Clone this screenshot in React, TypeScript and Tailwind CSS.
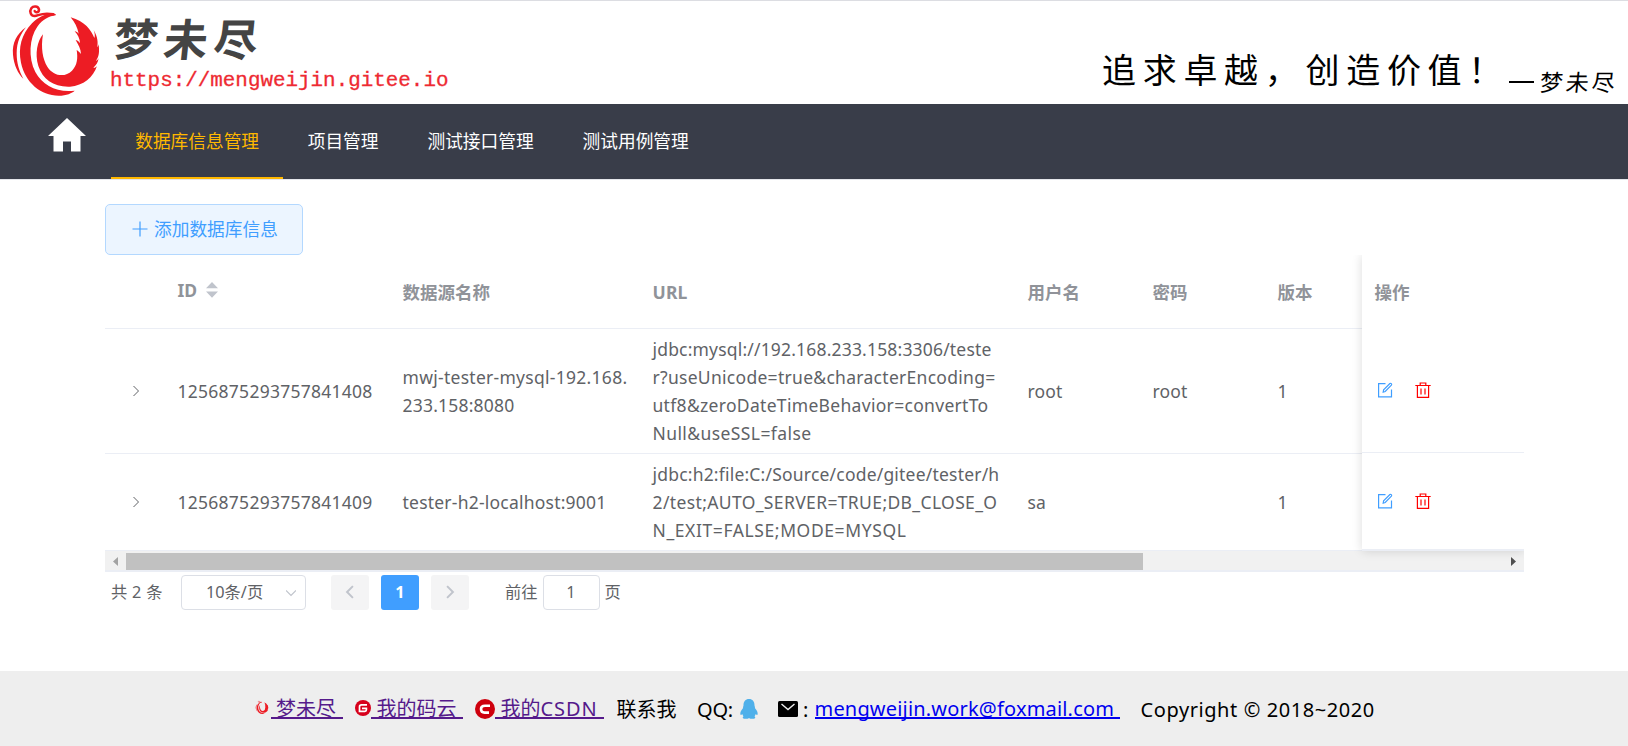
import React from "react";

const ui = "font-['Noto_Sans','Noto_Sans_CJK_SC',sans-serif]";

function PhoenixMark({ className }: { className: string }) {
  return (
    <svg viewBox="0 0 288 294" className={className} fill="#ed1c24">
      <path d="M80 27C84 34 94 30 93 22C90 12 76 11 70 19C63 29 69 42 80 42C92 41 102 30 136 37" fill="none" stroke="#ed1c24" strokeWidth="7.500" strokeLinecap="round" />
      <path d="M143 36C124 30 96 40 72 64C40 98 30 136 39 182C52 242 98 280 152 281C176 281 192 273 200 266C148 273 104 250 82 210C60 166 64 108 88 74C104 52 124 42 143 40Z" />
      <path d="M54 76C26 96 12 122 15 158C18 190 30 214 46 230C34 208 26 184 26 154C26 120 38 96 54 76Z" />
      <path d="M188 46C230 58 250 84 259 108C262 102 260 92 257 84C270 106 270 122 268 136C271 132 272 128 271 124C276 150 272 166 264 176C268 176 270 172 272 168C270 182 264 190 256 197C260 198 264 196 267 192C256 226 226 251 186 254C138 256 104 232 91 192C80 154 88 118 105 97C98 138 104 172 118 194C136 222 170 228 192 206C208 190 210 168 206 144C212 148 216 152 219 156C218 140 212 130 203 114C210 116 213 120 216 123C215 108 209 98 200 88C205 89 209 91 212 95C208 76 200 60 188 46Z" />
    </svg>
  );
}

function Home() {
  return (
    <svg viewBox="0 0 38 34" className="h-[34px] w-[38px]" fill="#fff">
      <path d="M19 0L38 18H32.500V33.500H23V23.500H15V33.500H5.500V18H0Z" />
    </svg>
  );
}

function Plus() {
  return (
    <svg viewBox="0 0 16 16" className="size-4" stroke="#409eff" strokeWidth="1.200">
      <path d="M8 .5v15M.5 8h15" />
    </svg>
  );
}

function Chevron({ className, dir, width = 1.2 }: { className: string; dir: "left" | "right" | "down"; width?: number }) {
  const d = { left: "M7.500 1L2.500 6L7.500 11", right: "M2.500 1L7.500 6L2.500 11", down: "M0 3.500L5 8.500L10 3.500" }[dir];
  return (
    <svg viewBox="0 0 10 12" className={className} fill="none" stroke="currentColor" strokeWidth={width}>
      <path d={d} />
    </svg>
  );
}

function EditIcon() {
  return (
    <svg viewBox="0 0 16 16" className="size-4" fill="none" stroke="#409eff" strokeWidth="1.200">
      <path d="M8.500 1.600H1.600V14.900H14.500V7.500" />
      <path d="M6.200 10.200L6.600 7.800L12.900 1.500Q13.600 1 14.300 1.700Q15 2.400 14.400 3.100L8.200 9.500Z" />
    </svg>
  );
}

function TrashIcon() {
  return (
    <svg viewBox="0 0 16 16" className="size-4" fill="none" stroke="#f00" strokeWidth="1.200">
      <path d="M.3 3.500H15.700M5.200 3.300V1H10.800V3.300M2.400 3.500V15.400H13.600V3.500M6 6.500V12.500M10 6.500V12.500" />
    </svg>
  );
}

function SortIcon() {
  return (
    <svg viewBox="0 0 12 16" className="h-4 w-3" fill="#c0c4cc">
      <path d="M6 0L12 6.300H0ZM6 15.700L0 9.500H12Z" />
    </svg>
  );
}

const navItems = ["数据库信息管理", "项目管理", "测试接口管理", "测试用例管理"];

const columns = "grid grid-cols-[60px_225px_250px_375px_125px_125px_96.5px]";

const rows = [
  {
    id: "1256875293757841408",
    name: [
      { t: "mwj-tester-mysql-192.168.", c: "tracking-[0.28px]" },
      { t: "233.158:8080", c: "tracking-[0.2px]" },
    ],
    url: [
      { t: "jdbc:mysql://192.168.233.158:3306/teste", c: "tracking-[0.18px]" },
      { t: "r?useUnicode=true&characterEncoding=", c: "tracking-[0.29px]" },
      { t: "utf8&zeroDateTimeBehavior=convertTo", c: "tracking-[0.31px]" },
      { t: "Null&useSSL=false", c: "tracking-[0.41px]" },
    ],
    user: "root",
    password: "root",
    version: "1",
    height: "h-[125px]",
  },
  {
    id: "1256875293757841409",
    name: [{ t: "tester-h2-localhost:9001", c: "tracking-[0.22px]" }],
    url: [
      { t: "jdbc:h2:file:C:/Source/code/gitee/tester/h", c: "tracking-[0.2px]" },
      { t: "2/test;AUTO_SERVER=TRUE;DB_CLOSE_O", c: "tracking-[0.37px]" },
      { t: "N_EXIT=FALSE;MODE=MYSQL", c: "tracking-[0.6px]" },
    ],
    user: "sa",
    password: "",
    version: "1",
    height: "h-[97px]",
  },
];

function Lines({ items }: { items: { t: string; c: string }[] }) {
  return (
    <div className="pl-[12.5px]">
      {items.map((l) => (
        <div key={l.t} className={`whitespace-nowrap ${l.c}`}>
          {l.t}
        </div>
      ))}
    </div>
  );
}

function Header() {
  return (
    <header className="flex h-[104px] justify-between border-t border-[#dcdde2] bg-white">
      <div className="flex pl-2">
        <PhoenixMark className="mt-px h-[98px] w-24" />
        <div className="flex flex-col pl-1.5">
          <div className="mt-[8px] ml-[4px] flex h-[60px] -skew-x-6 items-center gap-[6px] text-[44px] leading-none font-bold text-[#444]">
            <span>梦</span>
            <span>未</span>
            <span>尽</span>
          </div>
          <div className="font-['Liberation_Mono',monospace] text-[20.900px] leading-6 text-[#ee2a32] [-webkit-text-stroke:0.3px_#ee2a32]">https://mengweijin.gitee.io</div>
        </div>
      </div>
      <div className="flex pt-[45px] pr-[13px] text-black">
        <div className="flex h-12 items-center text-[34px] leading-none tracking-[6.700px]">追求卓越，创造价值！</div>
        <div className="mt-[22px] flex h-7 items-center text-[23px] leading-none tracking-[3px]">
          <span className="mr-1.5 h-[2px] w-[25px] bg-black" />
          <span className="-mr-[3px] -skew-x-6">梦未尽</span>
        </div>
      </div>
    </header>
  );
}

function Nav() {
  return (
    <nav className="flex h-[75px] bg-[#393d49] pl-12">
      <div className="mr-[25px] pt-[14px]">
        <Home />
      </div>
      {navItems.map((label, i) => (
        <div
          key={label}
          className={
            i === 0
              ? "flex border-b-2 border-[#ffb800] px-[24.200px] pt-6 text-[17.700px] leading-[27px] text-[#ffb800]"
              : "flex border-b-2 border-transparent px-[24.500px] pt-6 text-[17.700px] leading-[27px] text-white"
          }
        >
          {label}
        </div>
      ))}
    </nav>
  );
}

function FixedColumn() {
  return (
    <div className="absolute top-0 right-0 w-[162px] bg-white shadow-[0_0_10px_rgba(0,0,0,0.14)]">
      <div className="flex h-[73px] items-center pl-[12.500px] font-bold text-[#909399]">操作</div>
      <div className="flex h-[125px] items-center gap-[21.500px] border-b border-[#ebeef5] pb-px pl-[15px]">
        <EditIcon />
        <TrashIcon />
      </div>
      <div className="flex h-[98px] items-center gap-[21.500px] border-b-2 border-[#ebeef5] pb-px pl-[15px]">
        <EditIcon />
        <TrashIcon />
      </div>
    </div>
  );
}

function DataTable() {
  return (
    <div className="relative w-[1419px] overflow-hidden text-[17.5px] leading-7 text-[#606266]">
      <div className={`${columns} h-[74px] items-center border-b border-[#ebeef5] font-bold text-[#909399]`}>
        <span />
        <span className="flex items-center gap-[9px] pb-[4px] pl-[12.5px]">
          ID <SortIcon />
        </span>
        <span className="pl-[12.5px]">数据源名称</span>
        <span className="pl-[12.5px] tracking-[0.2px]">URL</span>
        <span className="pl-[12.5px]">用户名</span>
        <span className="pl-[12.5px]">密码</span>
        <span className="pl-[12.5px]">版本</span>
      </div>
      {rows.map((r) => (
        <div key={r.id} className={`${columns} ${r.height} items-center border-b border-[#ebeef5]`}>
          <span className="flex pl-[26px]">
            <Chevron className="h-3 w-2.5" dir="right" width={1} />
          </span>
          <span className="pl-[12.5px] tracking-[0.26px]">{r.id}</span>
          <Lines items={r.name} />
          <Lines items={r.url} />
          <span className="pl-[12.5px] tracking-[0.16px]">{r.user}</span>
          <span className="pl-[12.5px] tracking-[0.16px]">{r.password}</span>
          <span className="pl-[12.5px]">{r.version}</span>
        </div>
      ))}
      <div className="flex h-[21px] items-center border-b-2 border-[#ebeef5] bg-[#f1f1f1] pt-[2px]">
        <svg viewBox="0 0 5 9" className="ml-2 h-[9px] w-[5px]" fill="#a3a3a3">
          <path d="M5 0V9L0 4.500Z" />
        </svg>
        <div className="ml-2 h-[17px] w-[1017px] bg-[#c1c1c1]" />
        <svg viewBox="0 0 5 9" className="mr-2 ml-auto h-[9px] w-[5px]" fill="#505050">
          <path d="M0 0V9L5 4.500Z" />
        </svg>
      </div>
      <FixedColumn />
    </div>
  );
}

function Pagination() {
  return (
    <div className="flex h-[41px] items-center pl-1.5 text-[16.25px] leading-none text-[#606266]">
      <span className="w-[70px] tracking-[0.3px] whitespace-nowrap">共 2 条</span>
      <div className="flex h-[35px] w-[125px] items-center justify-between rounded-[4px] border border-[#dcdfe6] pr-[9px] pl-[24px]">
        <span>10条/页</span>
        <Chevron className="h-3 w-2.5 text-[#c0c4cc]" dir="down" />
      </div>
      <div className="ml-[25px] flex gap-3 pb-px">
        <div className="flex h-[35px] w-[38px] items-center justify-center rounded-[3px] bg-[#f4f4f5] text-[#c0c4cc]">
          <Chevron className="h-[14px] w-3" dir="left" width={1.7} />
        </div>
        <div className="flex h-[35px] w-[38px] items-center justify-center rounded-[3px] bg-[#409eff] font-bold text-white">1</div>
        <div className="flex h-[35px] w-[38px] items-center justify-center rounded-[3px] bg-[#f4f4f5] text-[#c0c4cc]">
          <Chevron className="h-[14px] w-3" dir="right" width={1.7} />
        </div>
      </div>
      <span className="ml-[36px]">前往</span>
      <div className="ml-[5px] flex h-[35px] w-[57px] items-center justify-center rounded-[4px] border border-[#dcdfe6]">1</div>
      <span className="ml-[5px]">页</span>
    </div>
  );
}

function Footer() {
  const link = "flex h-6 items-center border-b-2 border-[#551a8b] pl-[5.500px] pt-[6px] text-[#551a8b] whitespace-nowrap";
  return (
    <footer className="flex h-[75px] items-start bg-[#eee] pt-6 pl-[255px] text-[20px] leading-6 text-black">
      <div className="flex w-[15.500px] pt-[5px]">
        <PhoenixMark className="h-[15px] w-[14px]" />
      </div>
      <a className={`${link} w-[72px]`}>梦未尽</a>
      <svg viewBox="0 0 16 16" className="mt-[5px] ml-[12.5px] size-4">
        <circle cx="8" cy="8" r="8" fill="#d7001b" />
        <path d="M12 4.800H6.500Q4.500 4.800 4.500 6.800V11.400H9.800Q11.400 11.400 11.400 9.800V8.300H7" fill="none" stroke="#fff" strokeWidth="1.700" />
      </svg>
      <a className={`${link} w-[92px]`}>我的码云</a>
      <svg viewBox="0 0 20 20" className="mt-[4px] ml-3 size-5">
        <circle cx="10" cy="10" r="10" fill="#ce000d" />
        <path d="M15 6.700H10Q6 6.700 6 10Q6 13.600 9.600 13.600H14" fill="none" stroke="#fff" strokeWidth="2.600" />
      </svg>
      <a className={`${link} w-[109px]`}>
        我的<span className="tracking-[0.9px]">CSDN</span>
      </a>
      <span className="ml-[12.500px] w-[80.500px] pt-[3px]">联系我</span>
      <span className="w-[43px] pt-[3px] tracking-[-0.2px]">QQ:</span>
      <svg viewBox="0 0 18 20" className="mt-[4px] h-5 w-[18px]" fill="#4fb0ea">
        <path d="M9 0C12.500 0 14.600 2.600 14.500 6.500C15 8 15 9 15.200 9.600C17 11.500 18 13.500 17.600 15.600C17.200 16.400 16.400 15.800 15.800 15C15.400 16 15 16.800 14.500 17.300C15.600 18 15.600 19.600 14 19.800C12 20 10 19.800 9 19C8 19.800 6 20 4 19.800C2.400 19.600 2.400 18 3.500 17.300C3 16.800 2.600 16 2.200 15C1.600 15.800 .8 16.400 .4 15.600C0 13.500 1 11.500 2.800 9.600C3 9 3 8 3.500 6.500C3.400 2.600 5.500 0 9 0Z" />
      </svg>
      <svg viewBox="0 0 20 16" className="mt-[6px] ml-5 h-4 w-5">
        <rect width="20" height="16" rx="1.500" fill="#000" />
        <path d="M3.500 3L10 8.500L16.500 3" fill="none" stroke="#eee" strokeWidth="1.400" />
      </svg>
      <span className="ml-[5px] w-[11.500px] pt-[3px]">:</span>
      <a className="flex h-6 w-[305px] items-center border-b-2 border-[#0000ee] pt-[6px] tracking-[0.18px] whitespace-nowrap text-[#0000ee]">
        mengweijin.work@foxmail.com
      </a>
      <span className="ml-[21px] pt-[3px] tracking-[0.58px] whitespace-nowrap">Copyright © 2018~2020</span>
    </footer>
  );
}

export default function App() {
  return (
    <div className={`flex h-[746px] w-[1628px] flex-col overflow-hidden bg-white ${ui}`}>
      <Header />
      <Nav />
      <main className="flex flex-1 flex-col items-start border-t border-[#e4e6ea] pt-6 pl-[105px]">
        <div className="flex h-[51px] w-[198px] items-center gap-[6px] rounded-[5px] border border-[#b3d8ff] bg-[#ecf5ff] pb-px pl-[26px] text-[17.700px] text-[#409eff]">
          <Plus />
          添加数据库信息
        </div>
        <DataTable />
        <Pagination />
      </main>
      <Footer />
    </div>
  );
}
